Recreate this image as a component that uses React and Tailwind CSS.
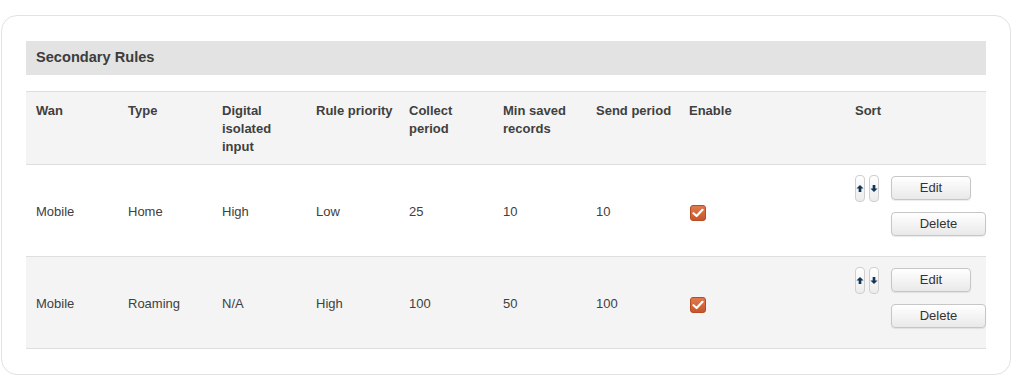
import React from 'react';

const rows = [
    { wan: 'Mobile', type: 'Home', digital: 'High', priority: 'Low', collect: '25', min: '10', send: '10' },
    { wan: 'Mobile', type: 'Roaming', digital: 'N/A', priority: 'High', collect: '100', min: '50', send: '100' },
];

const widths = ['w-[92px]', 'w-[94px]', 'w-[94px]', 'w-[93px]', 'w-[94px]', 'w-[93px]', 'w-[93px]', 'w-[166px]', 'w-[141px]'];

const ArrowBtn = ({ down }) => (
    <span className="w-[10px] h-[27px] rounded-[4px] border border-[#cfcfcf] bg-gradient-to-b from-white to-[#ececec] flex items-center justify-center">
        <svg width="9" height="9" viewBox="0 0 9 9" className={down ? 'rotate-180' : ''}>
            <path d="M4.5 0.5 L8.5 4.6 L6 4.6 L6 8.5 L3 8.5 L3 4.6 L0.5 4.6 Z" fill="#12365a" />
        </svg>
    </span>
);

const Button = ({ children, className }) => (
    <button className={`h-[24px] rounded-[4px] border border-[#c6c6c6] bg-gradient-to-b from-white to-[#e9e9e9] text-[13px] text-[#333] shadow-[0_1px_1px_rgba(0,0,0,0.08)] ${className}`}>
        {children}
    </button>
);

const Check = () => (
    <span className="w-[16px] h-[16px] rounded-[3px] bg-gradient-to-b from-[#e07a4e] to-[#c85628] border border-[#b44d25] flex items-center justify-center">
        <svg width="12" height="10" viewBox="0 0 12 10">
            <path d="M1.5 5.2 L4.6 8 L10.5 1.8" stroke="white" strokeWidth="2.2" fill="none" strokeLinecap="round" strokeLinejoin="round" />
        </svg>
    </span>
);

const App = () => {
    return (
        <div className="w-[1012px] h-[390px] bg-white pt-[15px] pl-px font-['Liberation_Sans',Arial,sans-serif] text-[#404040]">
            <div className="w-[1010px] h-[360px] border border-[#e2e2e2] rounded-[16px] px-[24px] pt-[25px]">
                {/* Title */}
                <div className="h-[34px] bg-[#e3e3e3] flex items-center px-[10px]">
                    <h2 className="text-[14.6px] font-bold text-[#3c3c3c]">Secondary Rules</h2>
                </div>

                <table className="mt-[16px] w-[960px] table-fixed border-collapse text-[13px]">
                    <colgroup>
                        {widths.map((w, i) => <col key={i} className={w} />)}
                    </colgroup>
                    <thead>
                        <tr className="bg-[#f4f4f4] border-t border-b border-[#dedede] h-[73px] align-top">
                            {['Wan', 'Type', 'Digital isolated input', 'Rule priority', 'Collect period', 'Min saved records', 'Send period', 'Enable', 'Sort'].map(h => (
                                <th key={h} className="text-left font-bold leading-[18px] pt-[10px] pl-[10px] pr-0">
                                    {h}
                                </th>
                            ))}
                        </tr>
                    </thead>
                    <tbody>
                        {rows.map((r, idx) => (
                            <tr key={idx} className={`border-b border-[#dedede] h-[92px] ${idx % 2 ? 'bg-[#f4f4f4]' : 'bg-white'}`}>
                                {[r.wan, r.type, r.digital, r.priority, r.collect, r.min, r.send].map((v, i) => (
                                    <td key={i} className="pl-[10px] align-middle pt-[3px]">{v}</td>
                                ))}
                                <td className="pl-[11px] align-middle pt-[4px]"><Check /></td>
                                <td className="align-top pt-[10px] pl-[10px]">
                                    <div className="flex">
                                        <div className="flex gap-[4px]">
                                            <ArrowBtn />
                                            <ArrowBtn down />
                                        </div>
                                        <div className="flex flex-col gap-[12px] ml-[12px] pt-px">
                                            <Button className="w-[80px]">Edit</Button>
                                            <Button className="w-[95px]">Delete</Button>
                                        </div>
                                    </div>
                                </td>
                            </tr>
                        ))}
                    </tbody>
                </table>
            </div>
        </div>
    );
};

export default App;
